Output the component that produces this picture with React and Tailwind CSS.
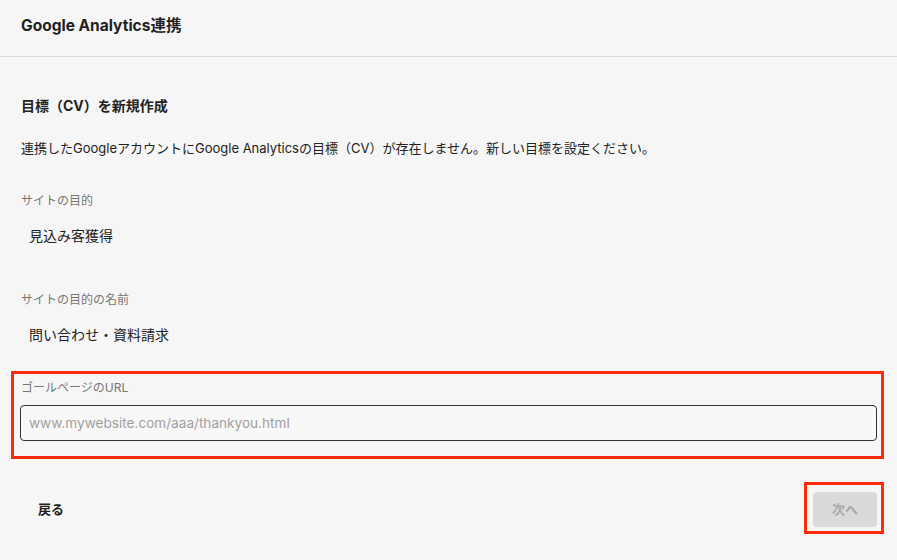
export default function App() {
  const font = { fontFamily: 'Inter, "Noto Sans CJK JP", sans-serif' };

  return (
    <div className="min-h-[560px] w-full bg-[#f6f6f6] text-[#222]" style={font}>
      {/* header */}
      <header className="flex h-[57px] items-center border-b border-[#d9d9d9] px-[21px] pb-[4px]">
        <h1 className="text-[15.5px] font-bold leading-[20px] text-[#1f1f1f]">Google Analytics連携</h1>
      </header>

      <main className="px-[20px]">
        <h2 className="mt-[39px] text-[14px] font-bold leading-[20px] pl-[1px]">目標（CV）を新規作成</h2>
        <p className="mt-[22px] text-[13px] leading-[20px] pl-[1px]">
          連携したGoogleアカウントにGoogle Analyticsの目標（CV）が存在しません。新しい目標を設定ください。
        </p>

        <div className="mt-[35px]">
          <label className="block text-[12px] leading-[16px] text-[#777] pl-[1px]">サイトの目的</label>
          <div className="mt-[8px] flex h-[36px] items-center pl-[9px] text-[14px]">見込み客獲得</div>
        </div>

        <div className="mt-[39px]">
          <label className="block text-[12px] leading-[16px] text-[#777] pl-[1px]">サイトの目的の名前</label>
          <div className="mt-[8px] flex h-[36px] items-center pl-[9px] text-[14px]">問い合わせ・資料請求</div>
        </div>

        <div className="-ml-[9px] -mr-[7px] mt-[19px] border-[3px] border-[#ff2a0a] pb-[15px] pl-[6px] pr-[4px] pt-[6px]">
          <label className="block text-[12px] leading-[16px] text-[#777] pl-[1px]">ゴールページのURL</label>
          <input
            type="text"
            placeholder="www.mywebsite.com/aaa/thankyou.html"
            className="mt-[9px] block h-[36px] w-full rounded-[4px] border border-[#333] bg-[#f8f8f8] px-[8px] text-[13.6px] outline-none placeholder:text-[#a0a0a0]"
            style={font}
          />
        </div>

        <div className="mt-[23px] flex items-center justify-between">
          <button className="px-[18px] pt-[2px] text-[13px] font-bold leading-[20px] text-[#1f1f1f]" style={font}>
            戻る
          </button>
          <div className="-mr-[7px] border-[3px] border-[#ff2a0a] pb-[4px] pl-[6px] pr-[4px] pt-[7px]">
            <button
              disabled
              className="flex h-[35px] w-[64px] items-center justify-center rounded-[4px] bg-[#dadada] text-[13px] font-bold text-[#a8a8a8]"
              style={font}
            >
              次へ
            </button>
          </div>
        </div>
      </main>
    </div>
  );
}
